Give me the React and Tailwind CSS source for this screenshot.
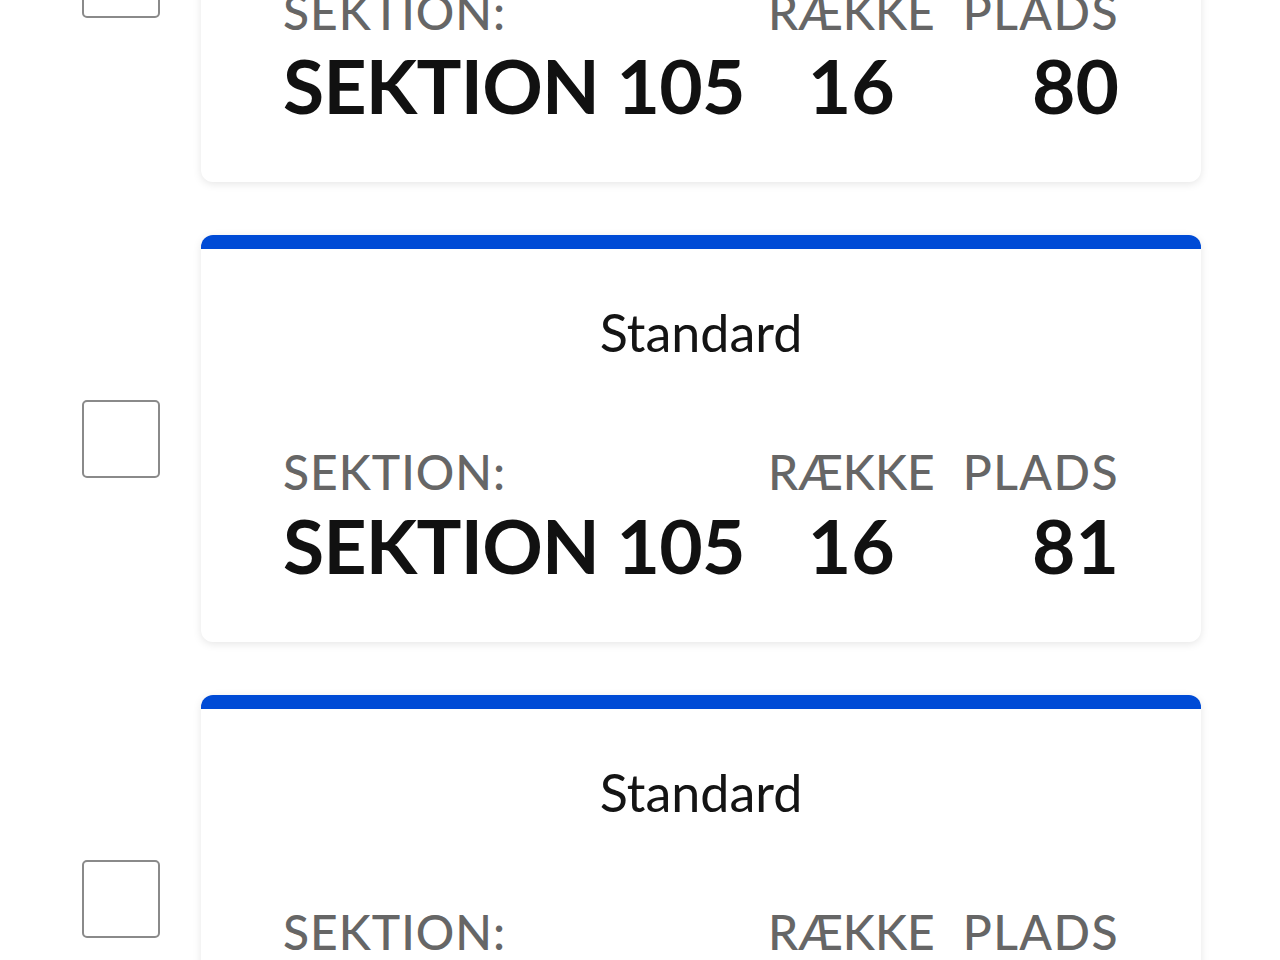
import React from "react";

const tickets = [
  { type: "Standard", section: "SEKTION 105", row: "16", seat: "80" },
  { type: "Standard", section: "SEKTION 105", row: "16", seat: "81" },
  { type: "Standard", section: "SEKTION 105", row: "16", seat: "82" },
];

const TicketRow = ({ ticket }) => (
  <div className="flex items-center gap-[41px]">
    <div className="w-[78px] h-[78px] rounded-[5px] border-2 border-[#8a8a8a] bg-white shrink-0" />
    <div className="w-[1000px] h-[407px] shrink-0 bg-white rounded-[12px] shadow-[0_2px_8px_rgba(0,0,0,0.10)] overflow-hidden flex flex-col">
      <div className="h-[14px] shrink-0 bg-[#004bd6]" />
      <div className="pt-[57px] text-center text-[52px] leading-none text-[#141414]">
        {ticket.type}
      </div>
      <div className="mt-[90px] px-[82px] flex items-start">
        <div className="flex-1 flex flex-col gap-[12px]">
          <span className="text-[48px] leading-none font-medium tracking-[0.02em] text-[#666666]">
            SEKTION:
          </span>
          <span className="text-[75px] leading-none font-bold tracking-[-0.01em] whitespace-nowrap text-[#111111]">
            {ticket.section}
          </span>
        </div>
        <div className="flex flex-col items-center gap-[12px]">
          <span className="text-[48px] leading-none font-medium text-[#666666]">
            RÆKKE
          </span>
          <span className="text-[75px] leading-none font-bold text-[#111111]">
            {ticket.row}
          </span>
        </div>
        <div className="ml-[28px] flex flex-col items-end gap-[12px]">
          <span className="text-[48px] leading-none font-medium tracking-[0.03em] text-[#666666]">
            PLADS
          </span>
          <span className="text-[75px] leading-none font-bold text-[#111111]">
            {ticket.seat}
          </span>
        </div>
      </div>
    </div>
  </div>
);

export default function App() {
  return (
    <div
      className="w-[1280px] h-[960px] overflow-hidden bg-white"
      style={{ fontFamily: "Lato, 'Noto Sans', sans-serif" }}
    >
      <div className="-mt-[225px] pl-[82px] flex flex-col gap-[53px]">
        {tickets.map((t, i) => (
          <TicketRow key={i} ticket={t} />
        ))}
      </div>
    </div>
  );
}
